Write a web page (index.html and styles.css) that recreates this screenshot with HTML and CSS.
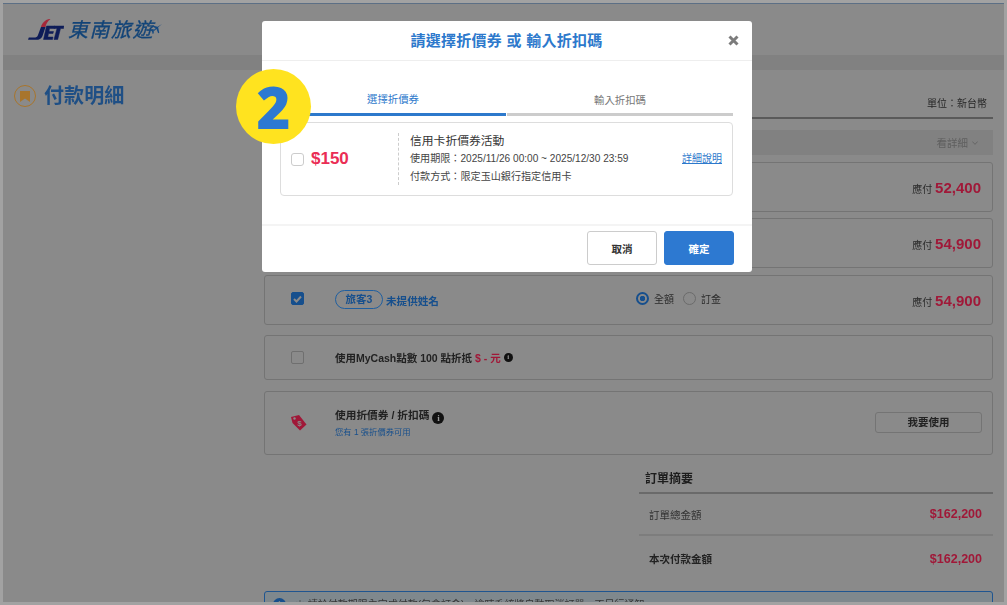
FILE: index.html
```html
<!DOCTYPE html>
<html lang="zh-Hant">
<head>
<meta charset="utf-8">
<title>付款明細</title>
<link rel="stylesheet" href="styles.css">
</head>
<body>
<div class="shot">
  <div class="page">
    <header class="top">
      <div class="logo">
        <svg class="logo-jet" width="36" height="21" viewBox="0 0 36 21"><path d="M13 8H17.500L14.500 17C13.500 20 11 20.800 8 20.800H0L.8 18.500H6C8 18.500 9.500 18 10 16Z" fill="#0e1c58"/><path d="M21 0C17 1 14 4 13 8H17.500C18 5 19.500 2 22.500 0Z" fill="#a5283a"/><path d="M18.500 7H27L26.500 9.500H21.500L21 12.500H25.500L25 14.500H20.500L19.800 18H25L24.500 20.500H15.500ZM26.500 7H36L35.500 9.500H32.500L29.700 20.500H26L29 9.500H26Z" fill="#0e1c58" stroke="#0e1c58" stroke-width=".5"/></svg>
        <span class="logo-text">東南旅遊</span>
        <svg class="logo-plane" width="11" height="11" viewBox="0 0 10 10"><path d="M10 0L6.500 3 7.500 8 6.500 8.500 5 4.500 2.500 6.500 2.500 8.500 1.500 9 1 7 0 5.500 1 5.300 2 6 4.200 3.800 .8 2 1.500 1.300 6 2.500Z" fill="#174a80"/></svg>
      </div>
    </header>
    <div class="strip"></div>
    <div class="columns">
      <aside class="side">
        <span class="side-icon"><svg width="10" height="11" viewBox="0 0 10 11"><path d="M0 0H10V11L5 7.500 0 11Z" fill="#a8752c"/></svg></span>
        <h1 class="side-title">付款明細</h1>
      </aside>
      <main class="main">
        <div class="unit">單位：新台幣</div>
        <div class="band">看詳細 <svg width="6" height="4" viewBox="0 0 6 4"><path d="M.3.5 3 3.300 5.700.5" fill="none" stroke="#5f5f5f" stroke-width=".8"/></svg></div>
        <section class="card h49"><span class="pay">應付 <b>52,400</b></span></section>
        <section class="card h49 g6"><span class="pay">應付 <b>54,900</b></span></section>
        <section class="card h50 g7 traveler">
          <span class="cell-check lift"><span class="check on"><svg width="9" height="8" viewBox="0 0 9 8"><path d="M1 4 3.500 6.500 8 1.500" fill="none" stroke="#8a8a8a" stroke-width="2"/></svg></span></span>
          <span class="pill">旅客3</span><span class="noname">未提供姓名</span>
          <span class="radios"><span class="radio on"></span>全額<span class="radio"></span>訂金</span>
          <span class="pay">應付 <b>54,900</b></span>
        </section>
        <section class="card h45 g10 cash">
          <span class="cell-check"><span class="check"></span></span>
          <span class="cash-text">使用MyCash點數 100 點折抵 <em>$ - 元</em></span><span class="info small">i</span>
        </section>
        <section class="card h64 g11 coupon">
          <span class="cell-check"><svg width="16" height="16" viewBox="0 0 16 16"><path d="M0 2 8 0 15.500 9.500 9 15.500 1.500 8Z" fill="#a01838"/><circle cx="3.500" cy="3.500" r="1.200" fill="#8a8a8a"/><text x="8.500" y="10.500" class="tag-s">$</text></svg></span>
          <div class="coupon-body">
            <div class="coupon-title">使用折價券 / 折扣碼 <span class="info">i</span></div>
            <div class="coupon-sub">您有 1 張折價券可用</div>
          </div>
          <span class="use-btn">我要使用</span>
        </section>
        <section class="summary">
          <h2 class="sum-title">訂單摘要</h2>
          <div class="sum-row"><span>訂單總金額</span><b>$162,200</b></div>
          <div class="sum-row total"><span>本次付款金額</span><b>$162,200</b></div>
        </section>
        <div class="notice"><span class="notice-icon">i</span><span>＊ 請於付款期限內完成付款(包含訂金)，逾時系統將自動取消訂單，不另行通知</span></div>
      </main>
    </div>
  </div>

  <div class="modal">
    <div class="modal-head"><span class="modal-title">請選擇折價券 或 輸入折扣碼</span><svg class="close" width="11" height="11" viewBox="0 0 11 11"><path d="M1.500 1.500 9.500 9.500M9.500 1.500 1.500 9.500" fill="none" stroke="#7c7c7c" stroke-width="3"/></svg></div>
    <div class="modal-body">
      <div class="tabs"><span class="tab active">選擇折價券</span><span class="tab">輸入折扣碼</span></div>
      <div class="voucher">
        <span class="v-check"></span>
        <span class="v-amount">$150</span>
        <div class="v-info">
          <div class="v-name">信用卡折價券活動</div>
          <div class="v-line">使用期限：2025/11/26 00:00 ~ 2025/12/30 23:59</div>
          <div class="v-line">付款方式：限定玉山銀行指定信用卡</div>
        </div>
        <a class="v-link" href="#">詳細說明</a>
      </div>
    </div>
    <div class="modal-foot"><button class="btn">取消</button><button class="btn primary">確定</button></div>
  </div>
  <div class="step">2</div>
</div>
</body>
</html>
```
FILE: styles.css
```css
* { box-sizing: border-box; }
html, body { margin: 0; padding: 0; }
body {
  width: 1007px; height: 605px; overflow: hidden; background: #a2a2a2;
  font-family: "Liberation Sans", "Noto Sans CJK TC", sans-serif;
}
.shot { position: relative; width: 1007px; height: 605px; padding: 3px 3px 3px 3px; }
.page { height: 599px; background: #8a8a8a; border-top: 1px solid #5c6f85; overflow: hidden; color: #222; filter: blur(.35px); }
.top { height: 51px; padding: 11px 0 0 25px; }
.logo { display: flex; align-items: flex-start; }
.logo-jet { margin-top: 4px; }
.logo-text { margin-left: 4px; font-size: 20px; line-height: 30px; color: #124478; -webkit-text-stroke: .3px #124478; letter-spacing: 1.500px; font-style: italic; white-space: nowrap; }
.logo-plane { margin: 9px 0 0 -3px; }
.strip { height: 15px; background: #818181; }
.columns { display: flex; }
.side { width: 261px; padding: 13px 0 0 11px; display: flex; align-items: flex-start; gap: 8px; }
.side-icon { width: 22px; height: 22px; margin-top: 2px; border: 1.500px solid #a8752c; border-radius: 50%; display: flex; align-items: center; justify-content: center; }
.side-title { margin: 0; font-size: 20px; line-height: 26px; font-weight: 700; color: #1f4f85; letter-spacing: .1px; }
.main { width: 729px; }
.unit { height: 49px; padding: 27px 6px 0 0; border-bottom: 2px solid #5a5a5a; text-align: right; font-size: 10px; line-height: 14px; color: #262626; margin-bottom: 11px; }
.band { height: 25px; background: #818181; display: flex; align-items: center; justify-content: flex-end; gap: 4px; padding-right: 15px; font-size: 10.500px; color: #5f5f5f; margin-bottom: 7px; }
.card { display: flex; align-items: center; border: 1px solid #747474; border-radius: 3px; padding-right: 11px; }
.h49 { height: 50px; } .h50 { height: 50px; } .h45 { height: 45px; } .h64 { height: 64px; }
.g6 { margin-top: 6px; } .g7 { margin-top: 7px; } .g10 { margin-top: 10px; } .g11 { margin-top: 11px; }
.pay { margin-left: auto; font-size: 10px; color: #2a2a2a; }
.pay b { font-size: 15px; color: #a01838; letter-spacing: 0; }
.cell-check { width: 70px; padding-left: 26px; display: flex; flex: none; }
.lift { margin-bottom: 3px; }
.check { width: 13px; height: 13px; border: 1px solid #6f6f6f; border-radius: 2px; display: flex; align-items: center; justify-content: center; }
.check.on { background: #164f8d; border-color: #164f8d; }
.pill { width: 48px; height: 19px; margin-top: -1px; border: 1px solid #1f5fa0; border-radius: 10px; font-size: 10.500px; line-height: 17px; text-align: center; color: #164f8d; font-weight: 700; }
.noname { margin-left: 3px; font-size: 10.600px; font-weight: 700; color: #164f8d; }
.radios { margin-left: 197px; margin-bottom: 3px; display: flex; align-items: center; font-size: 10px; color: #2a2a2a; }
.radio { width: 13px; height: 13px; margin: 0 5px 0 9px; border: 1.500px solid #6b6b6b; border-radius: 50%; }
.radio:first-child { margin-left: 0; }
.radio.on { border: 2px solid #164f8d; background: radial-gradient(circle, #164f8d 0 2.500px, transparent 3px); }
.cash-text { font-size: 10.500px; font-weight: 700; color: #222; }
.cash-text em { font-style: normal; color: #a01838; }
.info { display: inline-flex; width: 12px; height: 12px; border-radius: 50%; background: #111; color: #9a9a9a; font: 700 9px/12px "Liberation Serif", serif; justify-content: center; vertical-align: -2px; }
.info.small { width: 9px; height: 9px; font-size: 7px; line-height: 9px; margin-left: 3px; }
.coupon-title { font-size: 10.700px; line-height: 15px; font-weight: 700; color: #222; }
.coupon-sub { margin-top: 2px; font-size: 8.300px; line-height: 12px; color: #174f8c; }
.tag-s { font: 700 8px "Liberation Sans", sans-serif; fill: #8a8a8a; text-anchor: middle; }
.use-btn { margin-left: auto; margin-right: -1px; margin-bottom: 1px; width: 107px; height: 21px; border: 1px solid #747474; border-radius: 3px; font-size: 10.500px; font-weight: 700; line-height: 19px; text-align: center; color: #222; }
.summary { width: 354px; margin: 16px 0 0 auto; }
.sum-title { margin: 0; height: 21px; padding-left: 6px; font-size: 12px; line-height: 16px; font-weight: 700; color: #1d1d1d; }
.sum-row { display: flex; justify-content: space-between; align-items: center; padding: 0 11px 0 10px; height: 42px; border-top: 2px solid #6a6a6a; font-size: 10.500px; color: #333; }
.sum-row b { font-size: 12.500px; color: #a01838; }
.sum-row.total { height: 50px; padding-bottom: 3px; border-top: 2px solid #7d7d7d; font-weight: 700; color: #222; }
.notice { display: flex; align-items: flex-start; gap: 9px; height: 30px; margin-top: 7px; padding: 6px 0 0 8px; border: 1px solid #1f5590; border-radius: 3px; background: #7f888d; font-size: 10px; line-height: 13px; color: #333; white-space: nowrap; }
.notice-icon { width: 13px; height: 13px; border-radius: 50%; background: #174f8c; color: #7f888d; font: 700 10px/13px "Liberation Serif", serif; text-align: center; }

.modal { position: absolute; left: 262px; top: 21px; width: 490px; height: 251px; background: #fff; border-radius: 3px; display: flex; flex-direction: column; color: #333; }
.modal-head { flex: none; height: 40px; padding-bottom: 2px; border-bottom: 1px solid #eee; display: flex; align-items: center; justify-content: center; position: relative; }
.modal-title { font-size: 15px; font-weight: 700; color: #2d79cc; letter-spacing: .25px; margin-left: -1px; }
.close { position: absolute; right: 13px; top: 14px; }
.modal-body { flex: 1; padding: 25px 19px 0 18px; }
.tabs { display: flex; height: 30px; }
.tab { flex: 1; height: 30px; border-bottom: 3px solid #ccc; padding-top: 7px; text-align: center; font-size: 10.400px; line-height: 16px; color: #777; }
.tab.active { border-color: #2d79cc; color: #2d79cc; padding-top: 6px; margin-right: 1px; }
.voucher { display: flex; align-items: center; height: 74px; margin-top: 6px; padding: 0 10px; border: 1px solid #ddd; border-radius: 4px; }
.v-check { flex: none; width: 13px; height: 13px; border: 1px solid #ccc; border-radius: 3px; }
.v-amount { flex: none; width: 88px; margin-left: 7px; font-size: 17px; font-weight: 700; color: #ea2d55; }
.v-info { height: 52px; padding-left: 11px; border-left: 1px dashed #ccc; margin-left: -1px; }
.v-name { font-size: 11.800px; line-height: 16px; color: #333; }
.v-line { font-size: 10.100px; line-height: 17px; color: #444; }
.v-line:nth-child(2) { margin-top: 1px; }
.v-line:nth-child(3) { margin-top: 1px; }
.v-link { margin-left: auto; font-size: 10px; color: #2d79cc; align-self: center; margin-top: -3px; }
.modal-foot { flex: none; height: 48px; border-top: 2px solid #f4f4f4; display: flex; justify-content: flex-end; gap: 7px; padding: 5px 18px 0 0; }
.btn { width: 70px; height: 34px; background: #fff; border: 1px solid #ccc; border-radius: 3px; font: 700 10.500px "Liberation Sans", "Noto Sans CJK TC", sans-serif; color: #333; }
.btn.primary { background: #2d79d1; border-color: #2d79d1; color: #fff; }
.step { position: absolute; left: 236px; top: 69px; width: 75px; height: 75px; border-radius: 50%; background: #ffe31f; color: #2d79d1; font-size: 58px; font-weight: 800; line-height: 75px; text-align: center; font-family: "Open Sans", sans-serif; }
```
